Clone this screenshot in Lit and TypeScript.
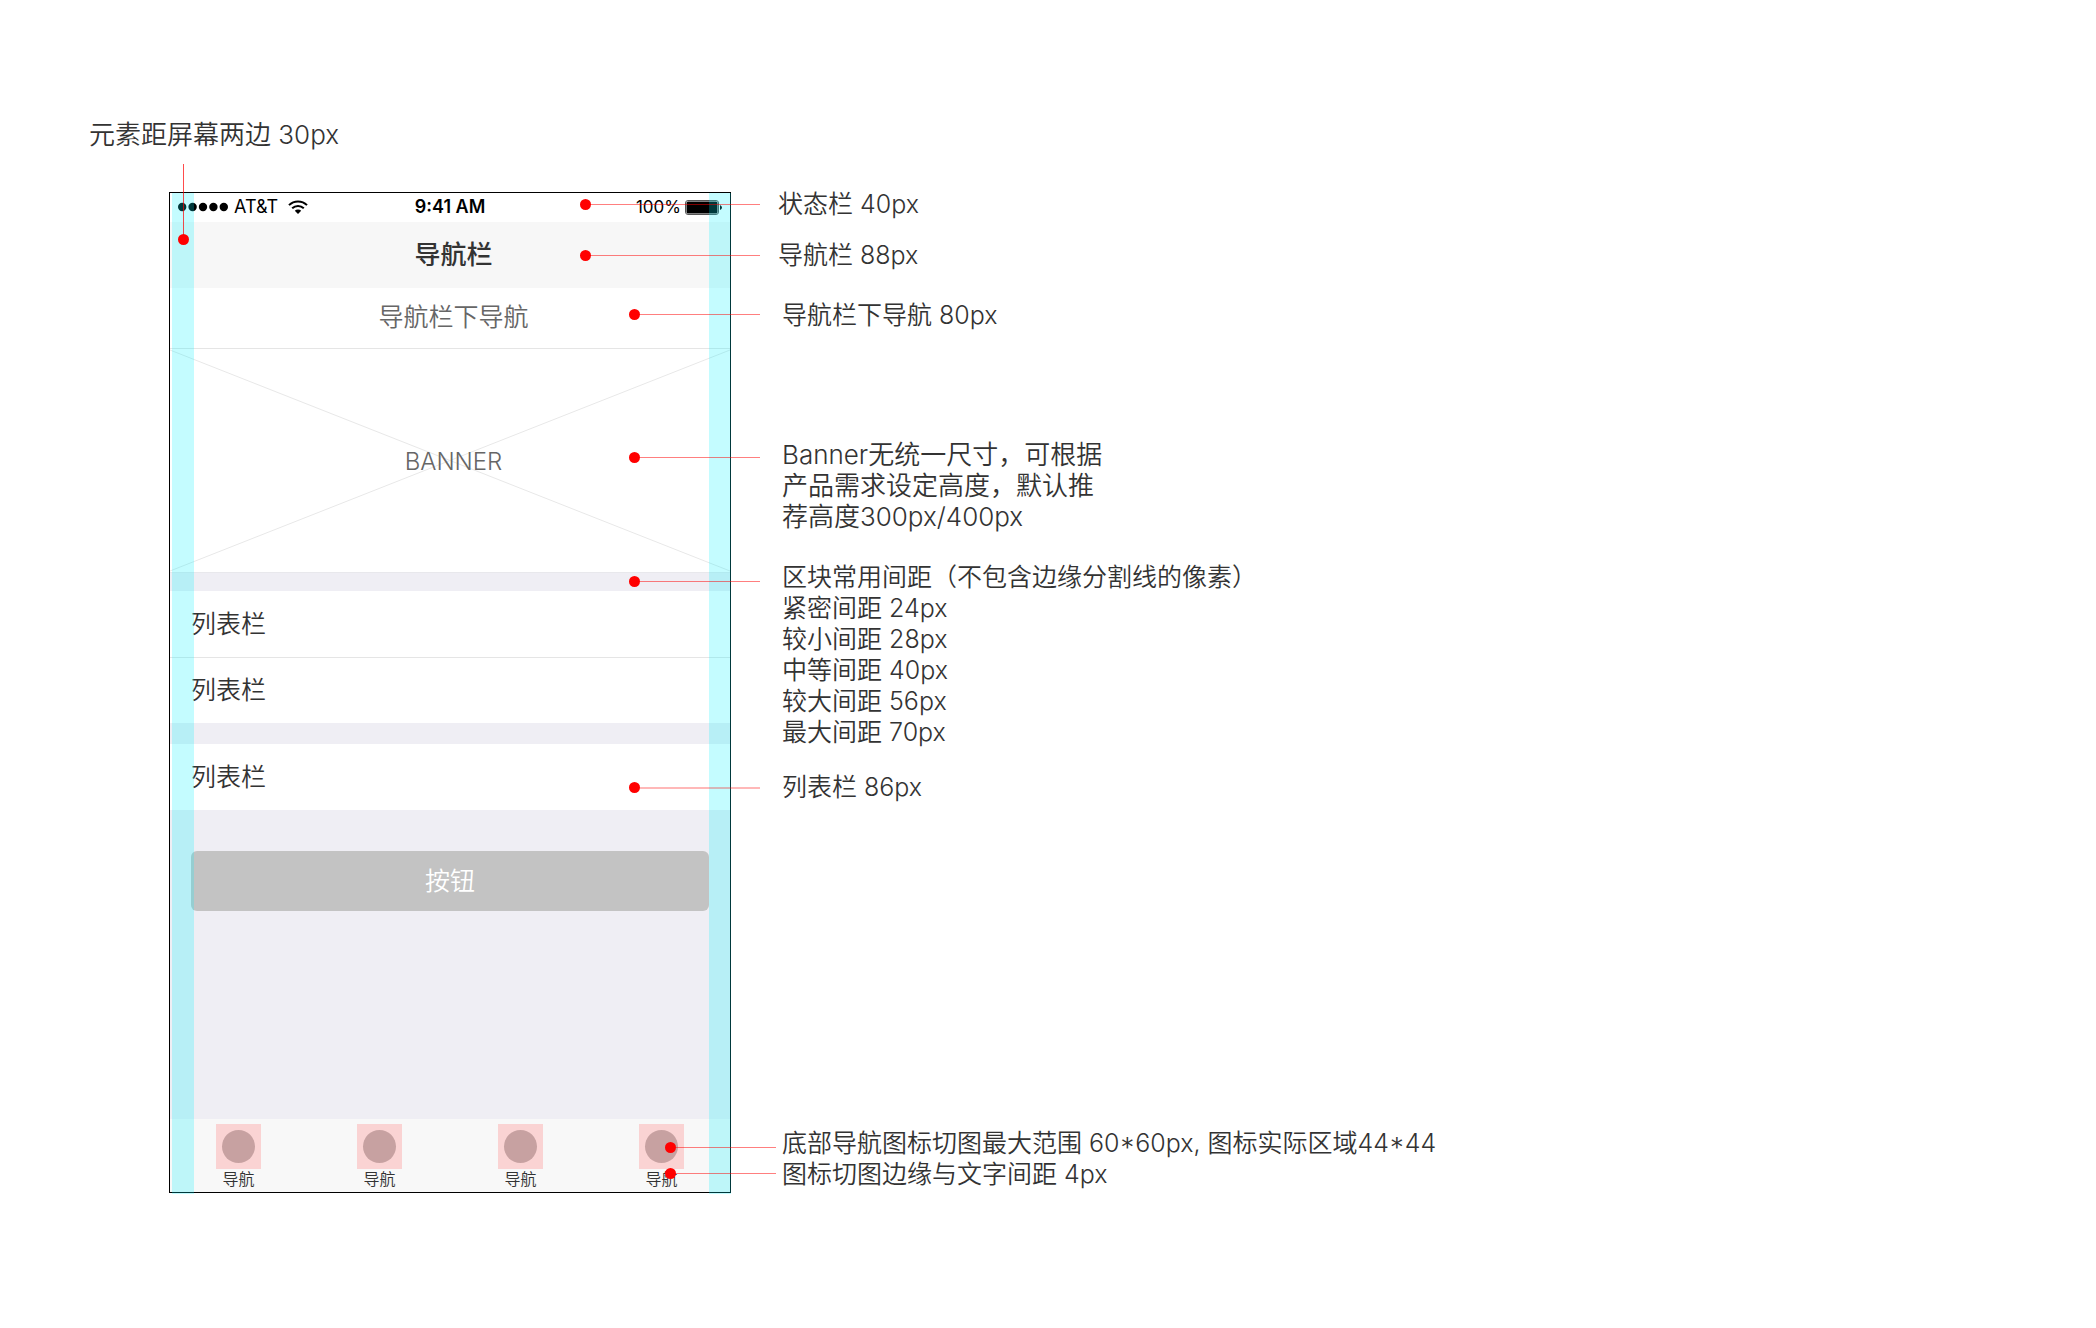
import { LitElement, html, svg, css } from "lit";
import { customElement, property } from "lit/decorators.js";
import { styleMap } from "lit/directives/style-map.js";

interface Leader {
  y: number;
  length: number;
  gap: number;
  soft?: boolean;
}

interface Note {
  kind: string;
  lines: string[];
  leaders: Leader[];
}

const NOTES: Note[] = [
  { kind: "status", lines: ["状态栏 40px"], leaders: [{ y: 15, length: 175, gap: 18 }] },
  { kind: "nav", lines: ["导航栏 88px"], leaders: [{ y: 15, length: 175, gap: 18 }] },
  { kind: "subnav", lines: ["导航栏下导航 80px"], leaders: [{ y: 14, length: 126, gap: 22 }] },
  {
    kind: "banner",
    lines: ["Banner无统一尺寸，可根据", "产品需求设定高度，默认推", "荐高度300px/400px"],
    leaders: [{ y: 18, length: 126, gap: 22 }],
  },
  {
    kind: "spacing",
    lines: [
      "区块常用间距（不包含边缘分割线的像素）",
      "紧密间距 24px",
      "较小间距 28px",
      "中等间距 40px",
      "较大间距 56px",
      "最大间距 70px",
    ],
    leaders: [{ y: 19, length: 126, gap: 22 }],
  },
  { kind: "list", lines: ["列表栏 86px"], leaders: [{ y: 15, length: 126, gap: 22, soft: true }] },
  {
    kind: "tabs",
    lines: ["底部导航图标切图最大范围 60*60px, 图标实际区域44*44", "图标切图边缘与文字间距 4px"],
    leaders: [
      { y: 19, length: 106, gap: 6 },
      { y: 45, length: 106, gap: 6 },
    ],
  },
];

@customElement("phone-mock")
export class PhoneMock extends LitElement {
  static styles = css`
    :host {
      display: flex;
      flex-direction: column;
      box-sizing: border-box;
      position: relative;
      border: 1px solid #000;
      background: #efeef4;
      color: #333;
      font-size: 25px;
    }
    .status {
      display: grid;
      grid-template-columns: 1fr auto 1fr;
      align-items: center;
      box-sizing: border-box;
      height: 29px;
      padding: 0 8px 1px;
      background: #fff;
      color: #000;
      font: 400 18px/26px Inter, sans-serif;
    }
    .carrier,
    .power {
      display: flex;
      align-items: center;
      gap: 6px;
    }
    .power {
      justify-content: flex-end;
      gap: 4px;
      font-size: 17px;
    }
    .clock {
      font-weight: 600;
    }
    .wifi {
      margin-left: 4px;
    }
    svg {
      display: block;
      flex: none;
    }
    .nav,
    .subnav {
      display: flex;
      align-items: center;
      justify-content: center;
      box-sizing: border-box;
      padding: 0 0 2px 7px;
    }
    .nav {
      height: 66px;
      margin: 0;
      background: #f7f7f7;
      font-size: 26px;
      font-weight: 500;
    }
    .subnav {
      height: 61px;
      background: #fff;
      border-bottom: 1px solid #e5e5e5;
      color: #666;
    }
    .banner {
      display: grid;
      place-items: center;
      height: 223px;
      background: #fff;
      border-bottom: 1px solid #e8e8ec;
      color: #666;
      font-size: 24px;
    }
    .banner > * {
      grid-area: 1 / 1;
    }
    .cross {
      width: 100%;
      height: 223px;
    }
    .banner-label {
      padding: 2px 0 0 7px;
    }
    .list {
      margin: 18px 0 0;
      padding: 0;
      list-style: none;
      background: #fff;
    }
    .list + .list {
      margin-top: 21px;
    }
    .row {
      display: flex;
      align-items: center;
      height: 66px;
      padding-left: 21px;
    }
    .row + .row {
      height: 65px;
      border-top: 1px solid #e5e5e5;
    }
    .action {
      height: 60px;
      margin: 41px 21px 0;
      padding: 0;
      border: 0;
      border-radius: 6px;
      background: #c3c3c3;
      color: #fff;
      font: inherit;
    }
    .tabs {
      display: flex;
      justify-content: space-between;
      margin-top: auto;
      height: 73px;
      box-sizing: border-box;
      padding: 5px 46px 0;
      background: #f8f8f8;
    }
    .tab {
      display: flex;
      flex-direction: column;
      align-items: center;
      width: 45px;
      color: inherit;
      font-size: 16px;
      line-height: 20px;
      text-decoration: none;
    }
    .slot {
      display: grid;
      place-items: center;
      width: 45px;
      height: 45px;
      background: #fad3d3;
    }
    .disc {
      width: 33px;
      height: 33px;
      border-radius: 50%;
      background: #c7a1a1;
    }
    .guide {
      position: absolute;
      top: 0;
      bottom: -2px;
      width: 22px;
      background: rgba(0, 242, 255, 0.23);
      pointer-events: none;
    }
    .guide-left {
      left: 2px;
    }
    .guide-right {
      right: -1px;
    }
  `;

  render() {
    return html`
      <div class="status">
        <div class="carrier">
          <svg width="50" height="10" viewBox="0 0 50 10" aria-hidden="true">
            ${[0, 1, 2, 3, 4].map((i) => svg`<circle cx=${4.2 + i * 10.4} cy="5" r="4.2" />`)}
          </svg>
          <span>AT&amp;T</span>
          <svg class="wifi" width="20" height="14" viewBox="0 0 20 14" aria-hidden="true">
            <g fill="none" stroke="#000" stroke-width="2">
              <path d="M1 5.1a12.8 12.8 0 0 1 18 0" />
              <path d="M4.2 8.3a8.2 8.2 0 0 1 11.6 0" />
            </g>
            <path d="M10 14 6.8 10.7a4.6 4.6 0 0 1 6.4 0z" />
          </svg>
        </div>
        <span class="clock">9:41 AM</span>
        <div class="power">
          <span>100%</span>
          <svg width="37" height="15" viewBox="0 0 37 15" aria-hidden="true">
            <rect x="0.5" y="0.5" width="33" height="14" rx="2.5" fill="#fff" stroke="#555" />
            <rect x="1.5" y="1.5" width="31" height="12" rx="1.5" />
            <path d="M35 5q2 1 2 2.500t-2 2.500z" />
          </svg>
        </div>
      </div>
      <h1 class="nav">导航栏</h1>
      <div class="subnav">导航栏下导航</div>
      <div class="banner">
        <svg class="cross" viewBox="0 0 560 223" preserveAspectRatio="none" aria-hidden="true">
          <path d="M0 1 560 222M0 222 560 1" stroke="#e8e8e8" />
        </svg>
        <span class="banner-label">BANNER</span>
      </div>
      <ul class="list">
        <li class="row">列表栏</li>
        <li class="row">列表栏</li>
      </ul>
      <ul class="list">
        <li class="row">列表栏</li>
      </ul>
      <button class="action" type="button">按钮</button>
      <nav class="tabs">
        ${["导航", "导航", "导航", "导航"].map(
          (label) => html`<a class="tab" href="#"><span class="slot"><span class="disc"></span></span>${label}</a>`,
        )}
      </nav>
      <div class="guide guide-left"></div>
      <div class="guide guide-right"></div>
    `;
  }
}

@customElement("spec-note")
export class SpecNote extends LitElement {
  @property({ attribute: false }) note!: Note;

  static styles = css`
    :host {
      display: block;
      position: relative;
    }
    .text {
      margin: 0;
      white-space: nowrap;
    }
    .leader {
      position: absolute;
      height: 1px;
      background: rgba(255, 0, 0, 0.5);
    }
    .soft {
      height: 2px;
      background: rgba(255, 0, 0, 0.28);
    }
    .leader::before {
      content: "";
      position: absolute;
      left: -5px;
      top: -5px;
      width: 11px;
      height: 11px;
      border-radius: 50%;
      background: #f00;
    }
  `;

  render() {
    return html`
      ${this.note.lines.map((line) => html`<p class="text">${line}</p>`)}
      ${this.note.leaders.map(
        (l) => html`<span
          class="leader ${l.soft ? "soft" : ""}"
          style=${styleMap({ top: `${l.y}px`, width: `${l.length}px`, right: `calc(100% + ${l.gap}px)` })}
        ></span>`,
      )}
    `;
  }
}

@customElement("app-root")
export class AppRoot extends LitElement {
  static styles = css`
    :host {
      display: block;
      box-sizing: border-box;
      min-height: 100vh;
      padding: 119px 89px 0;
      background: #fff;
      color: #333;
      font-family: Inter, "Noto Sans CJK SC", sans-serif;
      font-size: 25px;
      font-weight: 350;
      line-height: 31px;
    }
    .edge {
      position: relative;
      margin: 0;
    }
    .edge,
    .banner {
      font-size: 26px;
    }
    .edge::before,
    .edge::after {
      content: "";
      position: absolute;
      background: #f00;
    }
    .edge::before {
      left: 94px;
      top: 45px;
      width: 1px;
      height: 72px;
      opacity: 0.7;
      z-index: 1;
    }
    .edge::after {
      left: 89px;
      top: 115px;
      width: 11px;
      height: 11px;
      border-radius: 50%;
      z-index: 1;
    }
    .board {
      display: flex;
      align-items: flex-start;
      gap: 47px;
      margin-top: 39px;
      padding-left: 80px;
    }
    .phone {
      flex: none;
      width: 562px;
      min-height: 1001px;
      margin-top: 3px;
    }
    .notes {
      display: flex;
      flex-direction: column;
    }
    .nav {
      margin-top: 20px;
    }
    .subnav {
      margin-top: 29px;
    }
    .banner {
      margin-top: 108px;
    }
    .spacing {
      margin-top: 30px;
    }
    .list {
      margin-top: 24px;
    }
    .tabs {
      margin-top: 325px;
    }
    .subnav,
    .banner,
    .spacing,
    .list,
    .tabs {
      margin-left: 4px;
    }
  `;

  render() {
    return html`
      <p class="edge">元素距屏幕两边 30px</p>
      <main class="board">
        <phone-mock class="phone"></phone-mock>
        <div class="notes">
          ${NOTES.map((note) => html`<spec-note class=${note.kind} .note=${note}></spec-note>`)}
        </div>
      </main>
    `;
  }
}
